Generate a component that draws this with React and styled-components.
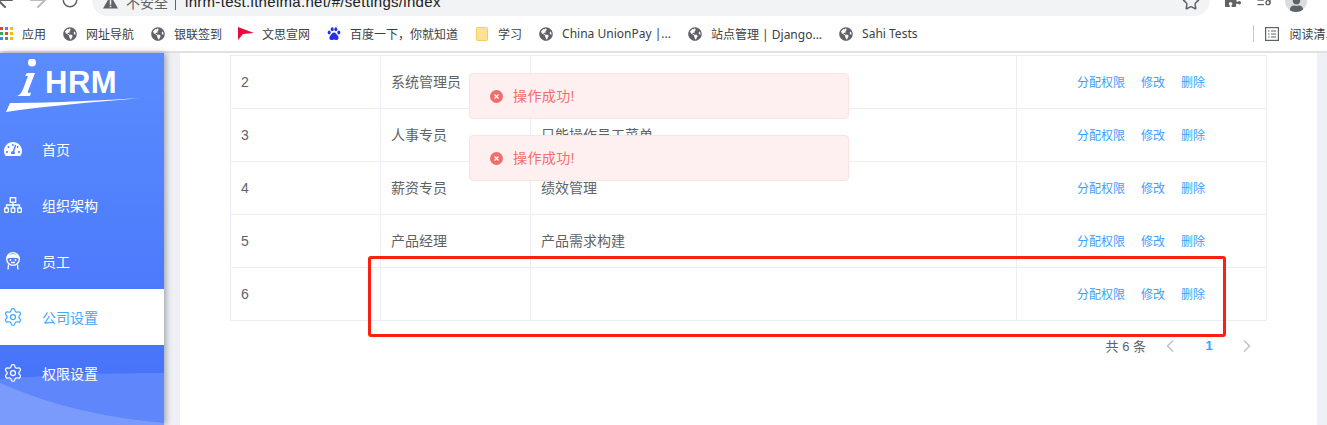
import React from "react";
import styled, { createGlobalStyle } from "styled-components";
import { ArrowLeft, ArrowRight, RotateCw, Star, ListMusic, Settings, ChevronLeft, ChevronRight } from "lucide-react";
import { FaGlobeAmericas, FaPuzzlePiece, FaTachometerAlt, FaUser } from "react-icons/fa";

const FONT = `"Liberation Sans", "Noto Sans CJK SC", sans-serif`;

const GlobalStyle = createGlobalStyle`
  html, body {
    margin: 0;
    padding: 0;
    height: 425px;
    overflow: hidden;
    background: #fff;
    font-family: ${FONT};
  }
  * { box-sizing: border-box; }
  svg { flex: none; }
`;

const Window = styled.div`
  position: relative;
  width: 1327px;
  height: 425px;
  overflow: hidden;
  display: flex;
  flex-direction: column;
`;

const Toolbar = styled.div`
  flex: none;
  height: 32px;
  margin-top: -16px;
  display: flex;
  align-items: center;
  color: #5f6368;
`;

const NavButton = styled.div`
  flex: none;
  width: ${(p) => p.$w}px;
  display: flex;
  justify-content: center;
  color: ${(p) => p.$color || "#5f6368"};
`;

const AddressBar = styled.div`
  flex: none;
  width: 1118px;
  height: 32px;
  margin-left: 18px;
  padding: 3px 10px 0 11px;
  border-radius: 16px;
  background: #f1f3f4;
  display: flex;
  align-items: center;
  font-size: 15px;
`;

const SecureLabel = styled.span`
  margin-left: 8px;
  color: #5f6368;
  font-size: 14px;
`;

const UrlDivider = styled.span`
  width: 1px;
  height: 16px;
  margin: 0 9px 0 7px;
  background: #5f6368;
`;

const UrlText = styled.span`
  flex: 1;
  color: #202124;
  letter-spacing: 0.3px;
`;

const ToolIcons = styled.div`
  display: flex;
  align-items: center;
  margin-left: 15px;
  gap: 15px;
`;

const Avatar = styled.div`
  width: 22px;
  height: 22px;
  margin: 2px 0 0 -2px;
  border-radius: 50%;
  background: #dadce0;
  color: #5f6368;
  display: flex;
  align-items: flex-end;
  justify-content: center;
  overflow: hidden;
`;

const BookmarkBar = styled.div`
  flex: none;
  height: 37px;
  display: flex;
  align-items: center;
  background: #fff;
  border-bottom: 2px solid #dfe1e5;
  font-family: "Noto Sans", "Noto Sans CJK SC", sans-serif;
`;

const Bookmark = styled.div`
  flex: none;
  display: flex;
  align-items: center;
  gap: ${(p) => p.$gap ?? 9}px;
  margin-right: 17px;
  font-size: 12px;
  color: #3c4043;
  white-space: nowrap;
`;

const BookmarkIcon = styled.span`
  width: 14px;
  height: 14px;
  flex: none;
  display: flex;
  align-items: center;
  justify-content: center;
  color: #5f6368;
`;

const AppsBookmark = styled(Bookmark)`
  margin-left: -1px;
`;

const BarSpacer = styled.div`
  flex: none;
  width: 319px;
`;

const BarDivider = styled.div`
  flex: none;
  width: 1px;
  height: 17px;
  margin-right: 11px;
  background: #c4c7cc;
`;

const Page = styled.div`
  flex: 1;
  min-height: 0;
  display: flex;
  background: #eff0f5;
`;

const Sidebar = styled.aside`
  position: relative;
  flex: none;
  width: 164px;
  overflow: hidden;
  background: linear-gradient(180deg, #5a8cff 0%, #4570f9 100%);
`;

const SidebarShadow = styled.div`
  position: relative;
  flex: none;
  display: flex;
  box-shadow: 2px 0 6px rgba(0, 21, 41, 0.35);
  z-index: 1;
`;

const Logo = styled.div`
  position: relative;
  z-index: 1;
  height: 68px;
  padding-left: 6px;
`;

const LogoRow = styled.div`
  display: flex;
  align-items: flex-end;
  height: 45px;
  padding-left: 10px;
  color: #fff;
`;

const LogoText = styled.span`
  margin-left: 9px;
  font-size: 31px;
  line-height: 31px;
  font-weight: 700;
  letter-spacing: 0.5px;
`;

const Swoosh = styled.svg`
  display: block;
`;

const Menu = styled.nav`
  position: relative;
  z-index: 1;
`;

const MenuItem = styled.div`
  height: 56px;
  padding-left: 4px;
  display: flex;
  align-items: center;
  font-size: 14px;
  background: ${(p) => (p.$active ? "#fff" : "transparent")};
  color: ${(p) => (p.$active ? "#43a7fe" : "#fff")};
`;

const MenuIcon = styled.span`
  width: 18px;
  height: 18px;
  flex: none;
  display: flex;
  align-items: center;
  justify-content: center;
  margin-right: 20px;
`;

const Wave = styled.svg`
  position: absolute;
  left: 0;
  bottom: 0;
  display: block;
`;

const Main = styled.main`
  flex: none;
  width: 1137px;
  margin-left: 16px;
  padding: 2px 50px 0;
  background: #fff;
`;

const Table = styled.table`
  width: 1037px;
  border-collapse: collapse;
  table-layout: fixed;
  font-size: 14px;
  color: #606266;
`;

const Cell = styled.td`
  height: 53px;
  padding: 0 10px 2px;
  border: 1px solid #ebeef5;
  white-space: nowrap;
  overflow: hidden;
`;

const IdCell = styled(Cell)`
  padding-bottom: 0;
`;

const ActionCell = styled(Cell)`
  text-align: right;
  padding-right: 61px;
`;

const ActionLink = styled.a`
  margin-left: 16px;
  font-size: 12px;
  color: #409eff;
`;

const Pager = styled.div`
  display: flex;
  align-items: center;
  justify-content: flex-end;
  height: 26px;
  margin-top: 12px;
  padding-right: 10px;
  font-size: 13px;
  color: #606266;
`;

const PagerTotal = styled.span`
  margin: -2px 14px 0 0;
`;

const PagerCurrent = styled.span`
  width: 30px;
  margin: -2px 13px 0 14px;
  text-align: center;
  font-weight: 700;
  color: #409eff;
`;

const PagerArrow = styled.span`
  display: flex;
  color: #c0c4cc;
`;

const Toast = styled.div`
  position: absolute;
  left: 469px;
  top: ${(p) => p.$top}px;
  width: 380px;
  height: 46px;
  padding-left: 20px;
  display: flex;
  align-items: center;
  gap: 10px;
  border: 1px solid #fde2e2;
  border-radius: 4px;
  background: #fef0f0;
  font-size: 14px;
  color: #f56c6c;
  z-index: 2;
`;

const ToastText = styled.span`
  margin-top: -2px;
  letter-spacing: 0.4px;
`;

const Annotation = styled.div`
  position: absolute;
  left: 368px;
  top: 256px;
  width: 858px;
  height: 81px;
  border: 3px solid #fb2014;
  border-radius: 3px;
  z-index: 3;
`;

const AppsIcon = () => (
  <svg width="13" height="13" viewBox="0 0 13 13">
    {[0, 5, 10].map((y, r) =>
      [0, 5, 10].map((x, c) => (
        <rect
          key={`${r}${c}`}
          x={x}
          y={y}
          width="3"
          height="3"
          fill={["#ea4335", "#4285f4", "#fbbc05", "#34a853", "#ea4335", "#fbbc05", "#4285f4", "#34a853", "#fbbc05"][r * 3 + c]}
        />
      ))
    )}
  </svg>
);

const FlagIcon = () => (
  <svg width="16" height="13" viewBox="0 0 16 13">
    <path d="M0 0 L16 6 L5 7 L0 13 Z" fill="#e60b3c" />
  </svg>
);

const PawIcon = () => (
  <svg width="14" height="14" viewBox="0 0 14 14" fill="#2932e1">
    <ellipse cx="2.200" cy="5.500" rx="1.500" ry="2" />
    <ellipse cx="5.200" cy="2.200" rx="1.500" ry="2" />
    <ellipse cx="8.800" cy="2.200" rx="1.500" ry="2" />
    <ellipse cx="11.800" cy="5.500" rx="1.500" ry="2" />
    <path d="M7 5.500c2 0 2.500 2 4 3.500 1.500 1.800 0 4.500-2 4-1-.2-1.500-.4-2-.4s-1 .2-2 .4c-2 .5-3.500-2.200-2-4 1.500-1.500 2-3.500 4-3.500z" />
  </svg>
);

const FolderIcon = () => (
  <svg width="12" height="14" viewBox="0 0 12 14">
    <rect x="0.500" y="0.500" width="11" height="13" rx="1" fill="#fde293" stroke="#f4cf5e" />
  </svg>
);

const WarningIcon = () => (
  <svg width="15" height="14" viewBox="0 0 16 14">
    <path d="M8 0 L16 14 H0 Z" fill="#5f6368" />
    <rect x="7.200" y="5" width="1.600" height="5" fill="#f1f3f4" />
    <rect x="7.200" y="11" width="1.600" height="1.600" fill="#f1f3f4" />
  </svg>
);

const ReaderIcon = () => (
  <svg width="14" height="14" viewBox="0 0 14 14" fill="none" stroke="#5f6368">
    <rect x="0.600" y="0.600" width="12.800" height="12.800" strokeWidth="1.200" />
    <path d="M3 4h1.500M3 7h1.500M3 10h1.500M6 4h5M6 7h5M6 10h5" strokeWidth="1.200" />
  </svg>
);

const OrgIcon = () => (
  <svg width="18" height="16" viewBox="0 0 18 16" fill="none" stroke="currentColor" strokeWidth="1.300">
    <rect x="6.300" y="0.700" width="5.400" height="4.600" />
    <path d="M9 5.300V8M2.500 11V8h13v3M9 8v3" />
    <rect x="0.700" y="11" width="3.600" height="4.300" rx="0.500" />
    <rect x="7.200" y="11" width="3.600" height="4.300" rx="0.500" />
    <rect x="13.700" y="11" width="3.600" height="4.300" rx="0.500" />
  </svg>
);

const EmployeeIcon = () => (
  <svg width="16" height="18" viewBox="0 0 16 18" fill="none" stroke="currentColor" strokeWidth="1.300">
    <circle cx="8" cy="7" r="6.300" />
    <path d="M2 6C3 1.500 13 1.500 14 6C11 4.800 5 4.800 2 6Z" fill="currentColor" />
    <circle cx="5.500" cy="8" r="0.900" fill="currentColor" stroke="none" />
    <circle cx="10.500" cy="8" r="0.900" fill="currentColor" stroke="none" />
    <path d="M6 10.500h4M3.500 12.500L3 17.500M12.500 12.500L13 17.500" />
  </svg>
);

const ErrorIcon = () => (
  <svg width="13" height="13" viewBox="0 0 13 13">
    <circle cx="6.500" cy="6.500" r="6.500" fill="#f56c6c" />
    <path d="M4.500 4.500l4 4M8.500 4.500l-4 4" stroke="#fff" strokeWidth="1.200" />
  </svg>
);

const LogoI = () => (
  <svg width="20" height="39" viewBox="0 0 20 39" fill="#fff">
    <circle cx="16" cy="3.500" r="4" />
    <path d="M11 14h8L12 32c-.8 2 .5 2.500 3 1.500l-1 3.500H1c3-1 5-4 6.500-8L12 17H9z" />
  </svg>
);

const GLOBE = <FaGlobeAmericas size={14} />;
const GEAR = <Settings size={20} strokeWidth={1.500} />;

const bookmarks = [
  { icon: GLOBE, label: "网址导航" },
  { icon: GLOBE, label: "银联签到" },
  { icon: <FlagIcon />, label: "文思宣网" },
  { icon: <PawIcon />, label: "百度一下，你就知道" },
  { icon: <FolderIcon />, label: "学习" },
  { icon: GLOBE, label: "China UnionPay |..." },
  { icon: GLOBE, label: "站点管理 | Django..." },
  { icon: GLOBE, label: "Sahi Tests" },
];

const menu = [
  { icon: <FaTachometerAlt size={18} />, label: "首页" },
  { icon: <OrgIcon />, label: "组织架构" },
  { icon: <EmployeeIcon />, label: "员工" },
  { icon: GEAR, label: "公司设置", active: true },
  { icon: GEAR, label: "权限设置" },
];

const rows = [
  { id: 2, name: "系统管理员", desc: "" },
  { id: 3, name: "人事专员", desc: "只能操作员工菜单" },
  { id: 4, name: "薪资专员", desc: "绩效管理" },
  { id: 5, name: "产品经理", desc: "产品需求构建" },
  { id: 6, name: "", desc: "" },
];

export default function App() {
  return (
    <>
      <GlobalStyle />
      <Window>
        <Toolbar>
          <NavButton $w={10}>
            <ArrowLeft size={24} />
          </NavButton>
          <NavButton $w={56} $color="#babcbe">
            <ArrowRight size={24} />
          </NavButton>
          <NavButton $w={8}>
            <RotateCw size={18} />
          </NavButton>
          <AddressBar>
            <WarningIcon />
            <SecureLabel>不安全</SecureLabel>
            <UrlDivider />
            <UrlText>ihrm-test.itheima.net/#/settings/index</UrlText>
            <Star size={18} />
          </AddressBar>
          <ToolIcons>
            <FaPuzzlePiece size={16} />
            <ListMusic size={16} />
            <Avatar>
              <FaUser size={15} />
            </Avatar>
          </ToolIcons>
        </Toolbar>
        <BookmarkBar>
          <AppsBookmark>
            <BookmarkIcon>
              <AppsIcon />
            </BookmarkIcon>
            应用
          </AppsBookmark>
          {bookmarks.map((b) => (
            <Bookmark key={b.label}>
              <BookmarkIcon>{b.icon}</BookmarkIcon>
              {b.label}
            </Bookmark>
          ))}
          <BarSpacer />
          <BarDivider />
          <Bookmark $gap={10}>
            <BookmarkIcon>
              <ReaderIcon />
            </BookmarkIcon>
            阅读清单
          </Bookmark>
        </BookmarkBar>
        <Page>
          <SidebarShadow>
            <Sidebar>
              <Logo>
                <LogoRow>
                  <LogoI />
                  <LogoText>HRM</LogoText>
                </LogoRow>
                <Swoosh width="136" height="15" viewBox="0 0 136 15">
                  <path d="M0 14 L4 5 C50 5 100 2 136 0 C90 4 40 8 0 14 Z" fill="#fff" />
                </Swoosh>
              </Logo>
              <Menu>
                {menu.map((m) => (
                  <MenuItem key={m.label} $active={m.active}>
                    <MenuIcon>{m.icon}</MenuIcon>
                    {m.label}
                  </MenuItem>
                ))}
              </Menu>
              <Wave width="164" height="52" viewBox="0 0 164 52">
                <path d="M0 6 C50 2 110 0 164 0 V52 H0 Z" fill="#5f87fb" />
                <path d="M0 10 C50 32 100 44 164 50 V52 H0 Z" fill="#7a9bfc" />
              </Wave>
            </Sidebar>
          </SidebarShadow>
          <Main>
            <Table>
              <colgroup>
                <col width="150" />
                <col width="150" />
                <col width="486" />
                <col width="250" />
              </colgroup>
              <tbody>
                {rows.map((r) => (
                  <tr key={r.id}>
                    <IdCell>{r.id}</IdCell>
                    <Cell>{r.name}</Cell>
                    <Cell>{r.desc}</Cell>
                    <ActionCell>
                      <ActionLink>分配权限</ActionLink>
                      <ActionLink>修改</ActionLink>
                      <ActionLink>删除</ActionLink>
                    </ActionCell>
                  </tr>
                ))}
              </tbody>
            </Table>
            <Pager>
              <PagerTotal>共 6 条</PagerTotal>
              <PagerArrow>
                <ChevronLeft size={20} />
              </PagerArrow>
              <PagerCurrent>1</PagerCurrent>
              <PagerArrow>
                <ChevronRight size={20} />
              </PagerArrow>
            </Pager>
          </Main>
        </Page>
        <Toast $top={73}>
          <ErrorIcon />
          <ToastText>操作成功!</ToastText>
        </Toast>
        <Toast $top={135}>
          <ErrorIcon />
          <ToastText>操作成功!</ToastText>
        </Toast>
        <Annotation />
      </Window>
    </>
  );
}
